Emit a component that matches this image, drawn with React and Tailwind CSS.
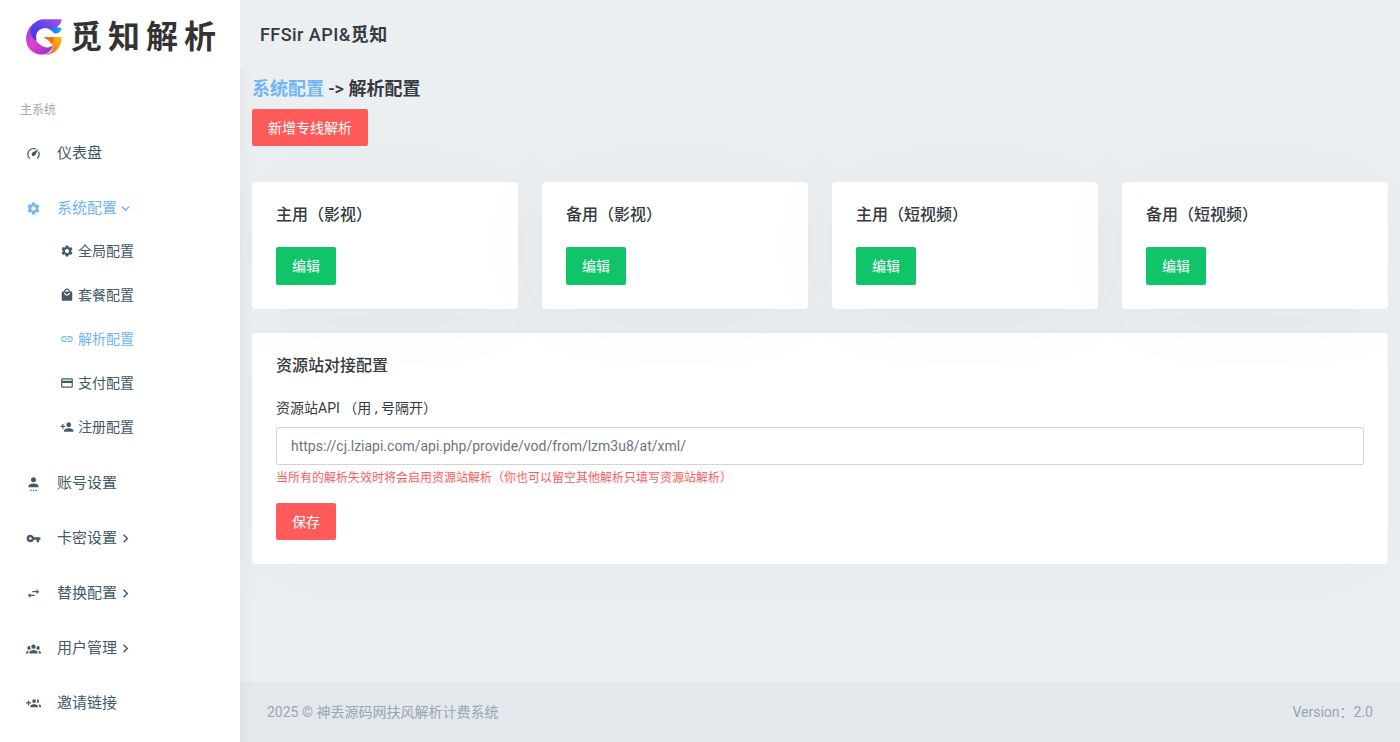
import {
  MdChevronRight,
  MdCreditCard,
  MdExpandMore,
  MdLink,
  MdLocalMall,
  MdPersonAdd,
  MdSettings,
  MdSwapHoriz,
  MdVpnKey,
} from "react-icons/md";

const makeIcon = (d) => (props) => (
  <svg viewBox="0 0 24 24" fill="currentColor" aria-hidden="true" {...props}>
    <path d={d} />
  </svg>
);

const SpeedIcon = makeIcon(
  "M12 16a3 3 0 0 1-3-3c0-1.12.61-2.1 1.5-2.61l9.71-5.62-5.53 9.58c-.5.98-1.51 1.65-2.68 1.65m0-13c1.81 0 3.5.5 4.97 1.32l-2.1 1.21C14 5.19 13 5 12 5a8 8 0 0 0-8 8c0 2.21.89 4.21 2.34 5.65h.01c.39.39.39 1.02 0 1.41s-1.03.39-1.42.01A9.97 9.97 0 0 1 2 13 10 10 0 0 1 12 3m10 10c0 2.76-1.12 5.26-2.93 7.07-.39.38-1.02.38-1.41-.01a1 1 0 0 1 0-1.41A7.95 7.95 0 0 0 20 13c0-1-.19-2-.54-2.9L20.67 8C21.5 9.5 22 11.18 22 13z"
);
const AccountIcon = makeIcon(
  "M12 2a4 4 0 0 1 4 4 4 4 0 0 1-4 4 4 4 0 0 1-4-4 4 4 0 0 1 4-4m0 10c4.42 0 8 1.79 8 4v2H4v-2c0-2.21 3.58-4 8-4M7 22h2v2H7v-2m4 0h2v2h-2v-2m4 0h2v2h-2v-2z"
);
const GroupIcon = makeIcon(
  "M12,5.5A3.5,3.5 0 0,1 15.5,9A3.5,3.5 0 0,1 12,12.5A3.5,3.5 0 0,1 8.5,9A3.5,3.5 0 0,1 12,5.5M5,8C5.56,8 6.08,8.15 6.53,8.42C6.38,9.85 6.8,11.27 7.66,12.38C7.16,13.34 6.16,14 5,14A3,3 0 0,1 2,11A3,3 0 0,1 5,8M19,8A3,3 0 0,1 22,11A3,3 0 0,1 19,14C17.84,14 16.84,13.34 16.34,12.38C17.2,11.27 17.62,9.85 17.47,8.42C17.92,8.15 18.44,8 19,8M5.5,18.25C5.5,16.18 8.41,14.5 12,14.5C15.59,14.5 18.5,16.18 18.5,18.25V20H5.5V18.25M0,20V18.5C0,17.11 1.89,15.94 4.45,15.6C3.86,16.28 3.5,17.22 3.5,18.25V20H0M24,20H20.5V18.25C20.5,17.22 20.14,16.28 19.55,15.6C22.11,15.94 24,17.11 24,18.5V20Z"
);
const GroupAddIcon = makeIcon(
  "M13,13C11,13 7,14 7,16V18H19V16C19,14 15,13 13,13M19.62,13.16C20.45,13.88 21,14.82 21,16V18H24V16C24,14.46 21.63,13.5 19.62,13.16M13,11A3,3 0 0,0 16,8A3,3 0 0,0 13,5A3,3 0 0,0 10,8A3,3 0 0,0 13,11M18,11A3,3 0 0,0 21,8A3,3 0 0,0 18,5C17.68,5 17.37,5.05 17.08,5.14C17.65,5.95 18,6.94 18,8C18,9.06 17.65,10.04 17.08,10.85C17.37,10.95 17.68,11 18,11M8,10H5V7H3V10H0V12H3V15H5V12H8V10Z"
);

const menu = [
  { label: "仪表盘", icon: SpeedIcon },
  {
    label: "系统配置",
    icon: MdSettings,
    open: true,
    children: [
      { label: "全局配置", icon: MdSettings },
      { label: "套餐配置", icon: MdLocalMall },
      { label: "解析配置", icon: MdLink, active: true },
      { label: "支付配置", icon: MdCreditCard },
      { label: "注册配置", icon: MdPersonAdd },
    ],
  },
  { label: "账号设置", icon: AccountIcon },
  { label: "卡密设置", icon: MdVpnKey, children: [] },
  { label: "替换配置", icon: MdSwapHoriz, children: [] },
  { label: "用户管理", icon: GroupIcon, children: [] },
  { label: "邀请链接", icon: GroupAddIcon },
];

const lines = ["主用（影视）", "备用（影视）", "主用（短视频）", "备用（短视频）"];

const cardClass = "rounded bg-white p-6 shadow-[0_0_100px_rgba(49,64,71,0.03)]";

const Logo = () => (
  <a href="#" className="flex h-[74px] items-center gap-2 pl-[26px] text-[#333]">
    <svg viewBox="0 0 108 108" className="h-9 w-9 shrink-0" aria-hidden="true">
      <defs>
        <linearGradient id="top" x1="0" y1="1" x2="1" y2="0">
          <stop offset="0" stopColor="#3a35e0" />
          <stop offset="0.5" stopColor="#5a45ea" />
          <stop offset="1" stopColor="#b050e8" />
        </linearGradient>
        <linearGradient id="left" x1="0" y1="0" x2="1" y2="1">
          <stop offset="0" stopColor="#8a3be0" />
          <stop offset="0.45" stopColor="#e040d0" />
          <stop offset="1" stopColor="#8a2fc4" />
        </linearGradient>
        <linearGradient id="tip" x1="0" y1="0" x2="1" y2="0">
          <stop offset="0" stopColor="#3a35e0" />
          <stop offset="1" stopColor="#18b0f4" />
        </linearGradient>
        <linearGradient id="warm" x1="0" y1="1" x2="1" y2="0">
          <stop offset="0" stopColor="#e8506a" />
          <stop offset="0.45" stopColor="#f7801e" />
          <stop offset="1" stopColor="#fdc010" />
        </linearGradient>
      </defs>
      <path d="M53 54h54c1 30-20 54-53 54 18-4 28-14 26-30-4-10-15-14-27-24z" fill="url(#warm)" />
      <path d="M53 54h30c1 9-2 17-8 23-3-11-11-15-22-23z" fill="#d8600c" opacity="0.6" />
      <path d="M26 11C-5 32-9 80 20 98c24 16 54 10 61-20-10 12-30 8-42-4C22 60 12 36 26 11z" fill="url(#left)" />
      <path d="M50 27c18-6 42-3 57 0-3 13-11 18-23 16-8-11-18-17-34-16z" fill="url(#tip)" />
      <path d="M107 1c-1 15-11 25-27 26H60C38 27 26 42 32 66 14 56 8 34 20 18 28 7 40 1 54 1z" fill="url(#top)" />
    </svg>
    <span className="flex gap-[6px] text-[32px] leading-9 font-bold">
      <span>觅</span>
      <span>知</span>
      <span>解</span>
      <span>析</span>
    </span>
  </a>
);

const MenuItem = ({ item }) => {
  const Icon = item.icon;
  const Arrow = item.open ? MdExpandMore : MdChevronRight;

  return (
    <li>
      <a
        href="#"
        className={`flex h-11 items-center pl-[26px] text-[15px] leading-6 ${item.open ? "text-[#70b5f9]" : "text-[#435966]"}`}
      >
        <Icon className="mr-4 h-[15px] w-[15px]" />
        {item.label}
        {item.children && <Arrow className="h-[17px] w-[17px]" />}
      </a>
      {item.open && (
        <ul>
          {item.children.map((child) => (
            <li key={child.label}>
              <a
                href="#"
                className={`flex h-11 items-center gap-1 pb-0.5 pl-[60px] text-sm ${child.active ? "text-[#70b5f9]" : "text-[#435966]"}`}
              >
                <child.icon className="h-[14px] w-[14px]" />
                {child.label}
              </a>
            </li>
          ))}
        </ul>
      )}
    </li>
  );
};

const Sidebar = () => (
  <aside className="z-10 w-60 shrink-0 bg-white">
    <Logo />
    <p className="mt-[26px] pl-5 text-xs leading-5 text-[#a0aab2]">主系统</p>
    <nav className="mt-[11px]">
      <ul className="flex flex-col gap-[11px]">
        {menu.map((item) => (
          <MenuItem key={item.label} item={item} />
        ))}
      </ul>
    </nav>
  </aside>
);

const App = () => {
  return (
    <div className="flex min-h-screen bg-[#ebeff2] font-[Roboto,'Noto_Sans_CJK_SC',sans-serif] text-sm text-[#343a40]">
      <Sidebar />

      <div className="flex min-w-0 flex-1 flex-col">
        <header className="z-20 flex h-[70px] items-center bg-[#ebeff2] px-5">
          <h1 className="text-lg font-medium tracking-wide">
            FFSir API&amp;<span className="font-bold">觅知</span>
          </h1>
        </header>

        <main className="relative flex-1 overflow-hidden px-3 pb-6 shadow-[inset_16px_0_16px_-16px_rgba(49,64,71,0.07)]">
          <h2 className="pt-1 text-lg leading-[30px] font-bold">
            <a href="#" className="text-[#70b5f9]">系统配置</a>
            <span className="font-medium"> -&gt; </span>
            解析配置
          </h2>
          <button className="mt-[5px] h-[37px] rounded-xs bg-[#ff5b5b] px-4 text-white">
            新增专线解析
          </button>

          <div className="mt-9 grid grid-cols-4 gap-6">
            {lines.map((name) => (
              <section key={name} className={cardClass}>
                <h3 className="text-base leading-[18px] font-medium">{name}</h3>
                <button className="mt-[23px] block h-[38px] rounded-xs bg-[#10c469] px-4 text-white">
                  编辑
                </button>
              </section>
            ))}
          </div>

          {/* Resource site */}
          <section className={`mt-6 ${cardClass}`}>
            <h3 className="text-base leading-[18px] font-medium">资源站对接配置</h3>
            <form className="mt-[22px]">
              <label htmlFor="api" className="block leading-[22px]">
                资源站API （用 , 号隔开）
              </label>
              <input
                id="api"
                type="text"
                placeholder="https://cj.lziapi.com/api.php/provide/vod/from/lzm3u8/at/xml/"
                className="mt-2 block h-[38px] w-full rounded-xs border border-[#ced4da] bg-white px-[14px] placeholder:text-[#6c757d]"
              />
              <p className="mt-1 text-xs leading-[18px] text-[#ff5b5b]">
                当所有的解析失效时将会启用资源站解析（你也可以留空其他解析只填写资源站解析）
              </p>
              <button type="button" className="mt-4 block h-[37px] rounded-xs bg-[#ff5b5b] px-4 text-white">
                保存
              </button>
            </form>
          </section>
        </main>

        <footer className="flex h-[60px] items-center justify-between bg-[#e3e8ec] px-[27px] text-[#98a6ad] shadow-[inset_16px_0_16px_-16px_rgba(49,64,71,0.07)]">
          <span>2025 © 神丢源码网扶风解析计费系统</span>
          <span>Version：2.0</span>
        </footer>
      </div>
    </div>
  );
};

export default App;
